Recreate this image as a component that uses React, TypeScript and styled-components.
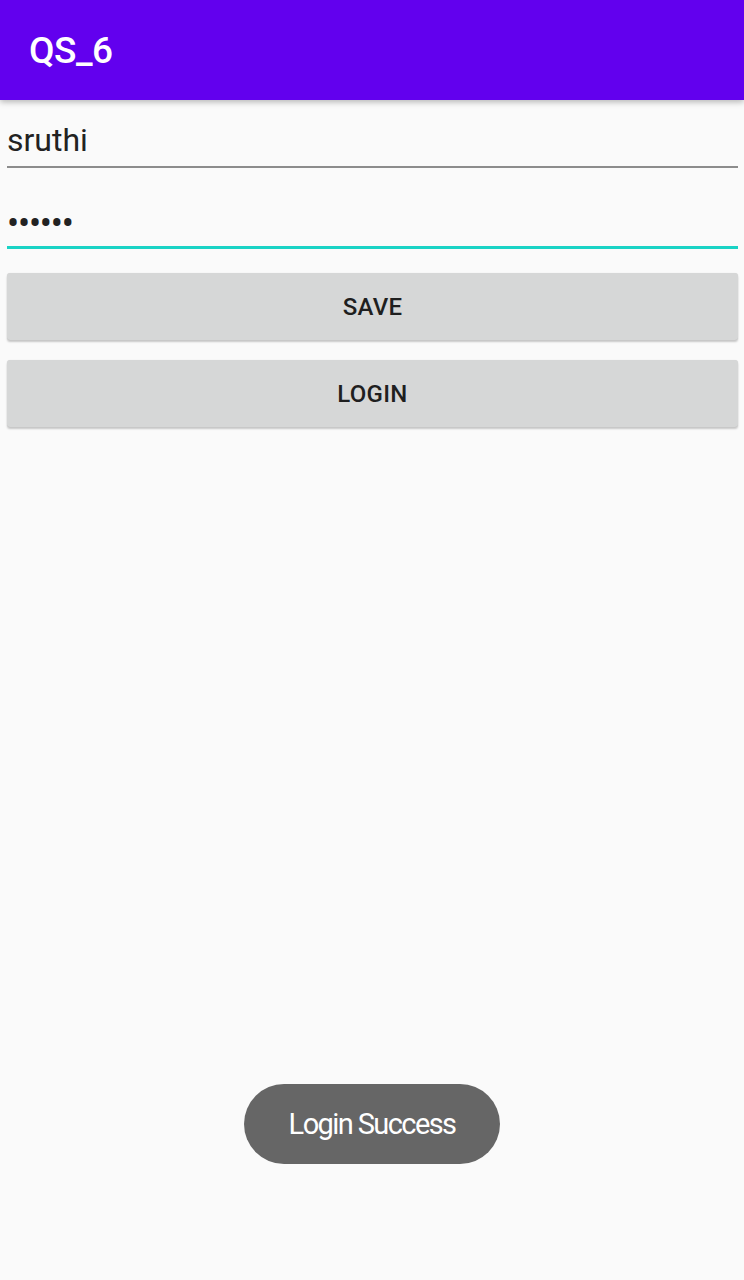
import * as React from 'react';
import styled, { createGlobalStyle } from 'styled-components';

const GlobalStyle = createGlobalStyle`
  html, body {
    margin: 0;
    padding: 0;
    background: #fafafa;
  }
  body {
    font-family: Roboto, "Liberation Sans", sans-serif;
  }
`;

const Screen = styled.div`
  position: relative;
  width: 744px;
  height: 1280px;
  overflow: hidden;
  background: #fafafa;
  display: flex;
  flex-direction: column;
`;

const AppBar = styled.header`
  height: 100px;
  flex-shrink: 0;
  background: #6200ee;
  display: flex;
  align-items: center;
  padding-left: 29px;
  box-shadow: 0 2px 6px rgba(0, 0, 0, 0.28);
  position: relative;
  z-index: 1;
`;

const Title = styled.h1`
  margin: 0;
  color: #ffffff;
  font-size: 37px;
  font-weight: 500;
  letter-spacing: -0.5px;
`;

const Form = styled.div`
  display: flex;
  flex-direction: column;
  padding: 0 6px 0 7px;
`;

const Field = styled.div<{ $focused?: boolean }>`
  height: ${(p) => (p.$focused ? '81px' : '68px')};
  display: flex;
  align-items: flex-end;
  box-sizing: border-box;
  border-bottom: ${(p) => (p.$focused ? '3px solid #19d3c5' : '2px solid #8c8c8c')};
  padding-bottom: ${(p) => (p.$focused ? '4px' : '10px')};
`;

const FieldText = styled.span`
  font-size: 32px;
  color: #222222;
  line-height: 1;
  letter-spacing: 0;
`;

const Dots = styled.span`
  font-size: 36px;
  color: #222222;
  line-height: 1;
  letter-spacing: -1.2px;
`;

const Button = styled.button<{ $top: number }>`
  margin-top: ${(p) => p.$top}px;
  height: 67px;
  width: 100%;
  border: none;
  border-radius: 3px;
  background: #d6d7d7;
  color: #1f1f1f;
  font-family: Roboto, "Liberation Sans", sans-serif;
  font-size: 24px;
  font-weight: 500;
  letter-spacing: 0.3px;
  box-shadow: 0 2px 2px rgba(0, 0, 0, 0.2), 0 0 1px rgba(0, 0, 0, 0.12);
  cursor: pointer;
`;

const Spacer = styled.div`
  flex: 1;
`;

const ToastRow = styled.div`
  display: flex;
  justify-content: center;
  padding-bottom: 116px;
`;

const Toast = styled.div`
  width: 256px;
  height: 80px;
  border-radius: 40px;
  background: #666666;
  display: flex;
  align-items: center;
  justify-content: center;
  color: #ffffff;
  font-size: 29px;
  letter-spacing: -1.6px;
`;

const App: React.FC = () => {
  return (
    <Screen>
      <GlobalStyle />
      <AppBar>
        <Title>QS_6</Title>
      </AppBar>
      <Form>
        <Field>
          <FieldText>sruthi</FieldText>
        </Field>
        <Field $focused>
          <Dots>••••••</Dots>
        </Field>
        <Button $top={24}>SAVE</Button>
        <Button $top={20}>LOGIN</Button>
      </Form>
      <Spacer />
      <ToastRow>
        <Toast>Login Success</Toast>
      </ToastRow>
    </Screen>
  );
};

export default App;
